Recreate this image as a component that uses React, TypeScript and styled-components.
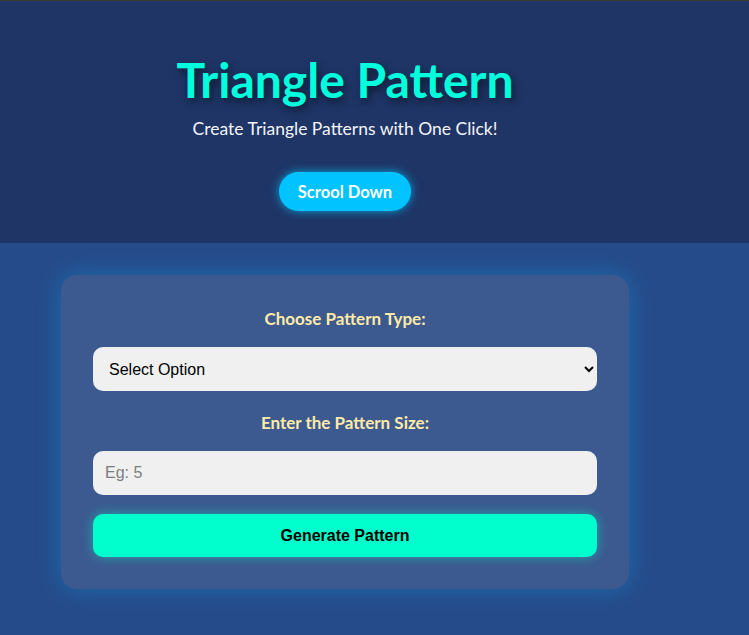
import styled, { createGlobalStyle } from 'styled-components';

const GlobalStyle = createGlobalStyle`
  html, body {
    margin: 0;
    padding: 0;
  }
  body {
    background: #264b8a;
    font-family: Lato, 'Noto Sans', sans-serif;
    border-top: 1px solid #3a3631;
    min-height: 634px;
  }
`;

function App() {
  return (
    <>
      <GlobalStyle />
      <Header>
        <HeaderInner>
          <Title>Triangle Pattern</Title>
          <Subtitle>Create Triangle Patterns with One Click!</Subtitle>
          <ScrollButton type="button">Scrool Down</ScrollButton>
        </HeaderInner>
      </Header>
      <Main>
        <Card>
          <Label>Choose Pattern Type:</Label>
          <Select defaultValue="">
            <option value="">Select Option</option>
            <option value="right">Right Triangle</option>
            <option value="left">Left Triangle</option>
            <option value="pyramid">Pyramid</option>
          </Select>
          <Label>Enter the Pattern Size:</Label>
          <Input type="number" placeholder="Eg: 5" />
          <GenerateButton type="button">Generate Pattern</GenerateButton>
        </Card>
      </Main>
    </>
  );
}

export default App;

const Header = styled.header`
  background: #1e3566;
  height: 242px;
`;

const HeaderInner = styled.div`
  width: 690px;
  display: flex;
  flex-direction: column;
  align-items: center;
  padding-top: 50px;
`;

const Title = styled.h1`
  margin: 0;
  color: #00ffdd;
  font-size: 48px;
  font-weight: 700;
  line-height: 58px;
  text-shadow: 2px 4px 8px rgba(0, 0, 0, 0.55);
`;

const Subtitle = styled.p`
  margin: 8px 0 0;
  color: #f2f4f8;
  font-size: 17.5px;
  line-height: 24px;
`;

const ScrollButton = styled.button`
  margin-top: 31px;
  height: 39px;
  padding: 0 19px;
  border: none;
  border-radius: 20px;
  background: #00c3ff;
  color: #ffffff;
  font-family: Lato, 'Noto Sans', sans-serif;
  font-size: 16.5px;
  font-weight: 700;
  box-shadow: 0 0 10px rgba(0, 200, 255, 0.75);
  cursor: pointer;
`;

const Main = styled.main`
  width: 690px;
  display: flex;
  justify-content: center;
  padding-top: 32px;
`;

const Card = styled.section`
  width: 504px;
  padding: 34px 32px 32px;
  display: flex;
  flex-direction: column;
  background: #3c5a90;
  border-radius: 16px;
  box-shadow: 0 0 24px rgba(0, 190, 255, 0.3);
`;

const Label = styled.label`
  display: block;
  text-align: center;
  color: #ffeaa7;
  font-size: 17px;
  font-weight: 700;
  line-height: 20px;
  margin-bottom: 18px;
`;

const fieldBase = `
  height: 44px;
  border: none;
  border-radius: 10px;
  background: #f0f0f0;
  font-family: 'Liberation Sans', Arial, sans-serif;
  font-size: 16px;
  color: #000;
  box-sizing: border-box;
  outline: none;
`;

const Select = styled.select`
  ${fieldBase}
  width: 100%;
  padding: 0 8px 0 12px;
  margin-bottom: 22px;
`;

const Input = styled.input`
  ${fieldBase}
  width: 100%;
  padding: 0 12px;
  margin-bottom: 19px;

  &::placeholder {
    color: #7d7d7d;
  }
`;

const GenerateButton = styled.button`
  height: 43px;
  border: none;
  border-radius: 10px;
  background: #00ffcc;
  color: #000;
  font-family: 'Liberation Sans', Arial, sans-serif;
  font-size: 16px;
  font-weight: 700;
  box-shadow: 0 0 12px rgba(0, 255, 204, 0.45);
  cursor: pointer;
`;
